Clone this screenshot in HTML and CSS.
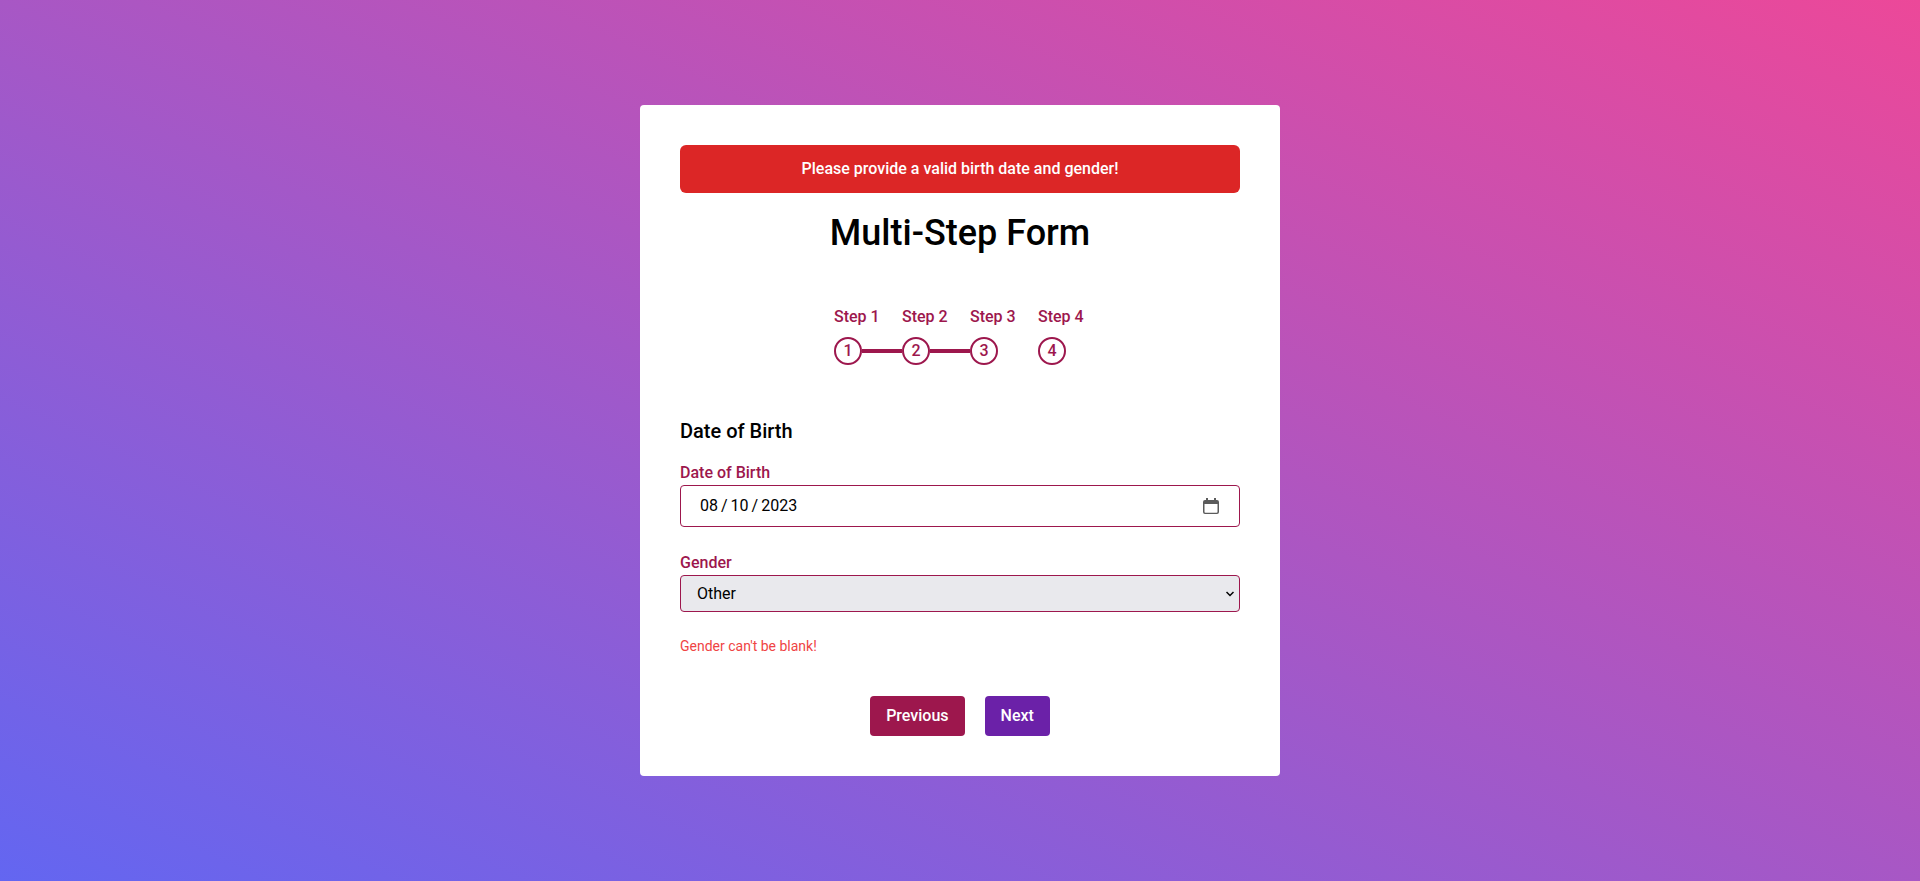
FILE: index.html
```html
<!DOCTYPE html>
<html lang="en">
<head>
<meta charset="utf-8">
<meta name="viewport" content="width=device-width, initial-scale=1">
<title>Multi-Step Form</title>
<link rel="stylesheet" href="styles.css">
</head>
<body>
<main class="page">
  <form class="card" novalidate>
    <p class="alert" role="alert">Please provide a valid birth date and gender!</p>
    <h1 class="title">Multi-Step Form</h1>
    <ol class="steps">
      <li class="step linked"><span class="step-name">Step 1</span><span class="step-dot">1</span></li>
      <li class="step linked"><span class="step-name">Step 2</span><span class="step-dot">2</span></li>
      <li class="step"><span class="step-name">Step 3</span><span class="step-dot">3</span></li>
      <li class="step"><span class="step-name">Step 4</span><span class="step-dot">4</span></li>
    </ol>
    <h2 class="heading">Date of Birth</h2>
    <div class="field">
      <label class="label" for="dob">Date of Birth</label>
      <input class="date" type="date" id="dob" value="2023-08-10">
    </div>
    <div class="field">
      <label class="label" for="gender">Gender</label>
      <select class="select" id="gender">
        <option>Male</option>
        <option>Female</option>
        <option selected>Other</option>
      </select>
    </div>
    <p class="error">Gender can't be blank!</p>
    <div class="actions">
      <button class="button previous" type="button">Previous</button>
      <button class="button next" type="button">Next</button>
    </div>
  </form>
</main>
</body>
</html>
```
FILE: styles.css
```css
*, *::before, *::after { box-sizing: border-box; }
body, h1, h2, p, ol { margin: 0; padding: 0; }
body { font: 500 16px/24px Roboto, sans-serif; color: #000; }
.page {
  min-height: 100vh;
  display: flex;
  align-items: center;
  justify-content: center;
  background: linear-gradient(to top right, #6366f1, #ec4899);
}
.card {
  width: 640px;
  max-width: 100%;
  padding: 40px;
  background: #fff;
  border-radius: 4px;
}
.alert {
  padding: 12px;
  margin-bottom: 20px;
  text-align: center;
  color: #fff;
  background: #dc2626;
  border-radius: 6px;
}
.title { font-size: 36px; line-height: 40px; font-weight: 500; text-align: center; }
.steps {
  display: flex;
  justify-content: center;
  gap: 20px;
  margin: 52px 0;
  list-style: none;
  color: #9d174d;
}
.step { position: relative; width: 48px; white-space: nowrap; }
.step-name { display: block; margin-bottom: 8px; }
.step-dot {
  display: flex;
  align-items: center;
  justify-content: center;
  width: 28px;
  height: 28px;
  border: 2px solid #9d174d;
  border-radius: 50%;
}
.linked::after {
  content: "";
  position: absolute;
  left: 28px;
  bottom: 12px;
  width: 40px;
  height: 4px;
  background: #9d174d;
}
.heading { font-size: 20px; line-height: 28px; font-weight: 500; margin-bottom: 16px; }
.field { margin-bottom: 24px; }
.label { display: block; color: #9d174d; }
.date, .select {
  display: block;
  width: 100%;
  font: 400 16px/24px Roboto, sans-serif;
  color: #000;
  border: 1px solid #9d174d;
  border-radius: 4px;
}
.date { height: 42px; padding: 8px 20px 8px 18px; background: #fff; }
.date::-webkit-datetime-edit-text { padding: 0 2px; }
.date::-webkit-calendar-picker-indicator {
  width: 16px;
  height: 16px;
  padding: 0;
  background: url("data:image/svg+xml,%3Csvg xmlns='http://www.w3.org/2000/svg' viewBox='0 0 16 16'%3E%3Cpath fill='%235b5b5b' fill-rule='evenodd' d='M3 0h2v2h6V0h2v2h1a2 2 0 0 1 2 2v10a2 2 0 0 1-2 2H2a2 2 0 0 1-2-2V4a2 2 0 0 1 2-2h1zM1.500 6v8q0 .8.8.8h11.400q.8 0 .8-.8V6z'/%3E%3C/svg%3E") center / 16px no-repeat;
}
.select {
  height: 37px;
  padding: 6px 16px;
  appearance: none;
  background: #e9e9ed url("data:image/svg+xml,%3Csvg xmlns='http://www.w3.org/2000/svg' viewBox='0 0 8 6'%3E%3Cpath fill='none' stroke='%23000' stroke-width='1.500' d='M.5 1 4 4.500 7.500 1'/%3E%3C/svg%3E") right 5px center / 8px 6px no-repeat;
}
.error { font-size: 14px; line-height: 20px; font-weight: 400; color: #ef4444; }
.actions { display: flex; justify-content: center; gap: 20px; margin-top: 40px; }
.button {
  padding: 8px 16px;
  font: inherit;
  color: #fff;
  border: 0;
  border-radius: 4px;
}
.previous { background: #9d174d; }
.next { background: #6b21a8; }
```
